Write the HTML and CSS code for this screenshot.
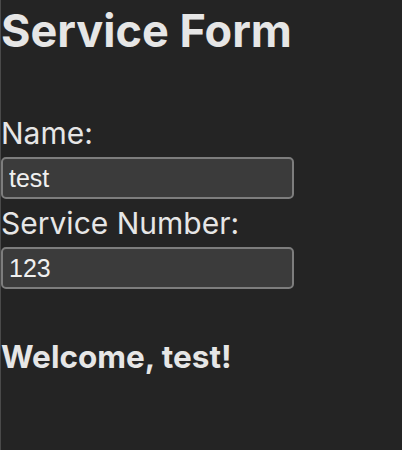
FILE: index.html
```html
<!DOCTYPE html>
<html>
<head>
<meta charset="utf-8">
<link rel="stylesheet" href="styles.css">
</head>
<body>
<div class="page">
  <h1 class="title">Service Form</h1>
  <form class="form">
    <label class="label" for="name">Name:</label>
    <input class="field" id="name" type="text" value="test">
    <label class="label" for="num">Service Number:</label>
    <input class="field" id="num" type="text" value="123">
  </form>
  <h3 class="welcome">Welcome, test!</h3>
</div>
</body>
</html>
```
FILE: styles.css
```css
html, body {
  margin: 0;
  padding: 0;
  background: #242424;
  height: 100%;
}
.page {
  border-left: 1px solid #4a4a4a;
  min-height: 100%;
  box-sizing: border-box;
  color: #e6e6e6;
  font-family: Inter, "Noto Sans", sans-serif;
  display: flex;
  flex-direction: column;
  align-items: flex-start;
}
.title {
  margin: 4px 0 0 0;
  font-size: 45px;
  line-height: 54px;
  font-weight: 700;
}
.form {
  display: flex;
  flex-direction: column;
  align-items: flex-start;
  margin-top: 51px;
}
.label {
  font-size: 30px;
  line-height: 48px;
}
.field {
  box-sizing: border-box;
  width: 293px;
  height: 42px;
  margin: 0;
  padding: 0 6px;
  background: #3b3b3b;
  border: 2px solid #7d7d7d;
  border-radius: 5px;
  color: #f0f0f0;
  font-family: "Liberation Sans", Arial, sans-serif;
  font-size: 25px;
  outline: none;
}
.welcome {
  margin: 49px 0 0 0;
  font-size: 31.5px;
  line-height: 38px;
  font-weight: 700;
}
```
